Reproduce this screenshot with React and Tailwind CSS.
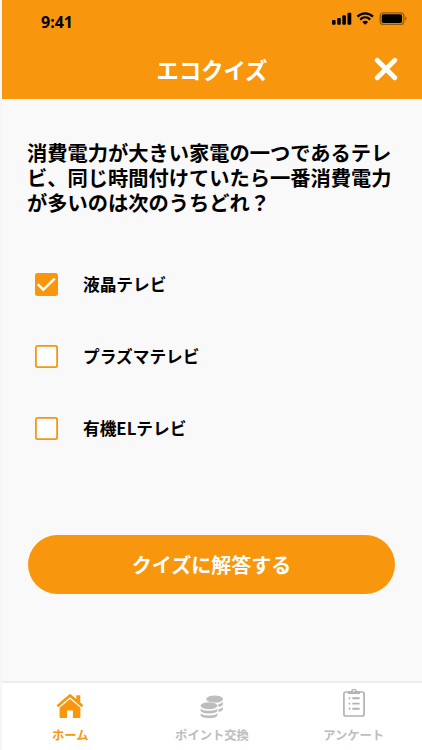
import React, { useState } from 'react';

const options = [
  { id: 'lcd', label: '液晶テレビ' },
  { id: 'plasma', label: 'プラズマテレビ' },
  { id: 'oled', label: '有機ELテレビ' },
];

const StatusIcons = () => (
  <svg width="78" height="16" viewBox="0 0 78 16" fill="none">
    {/* Signal */}
    <rect x="2" y="9" width="3.6" height="4.8" rx="1" fill="#000" />
    <rect x="7.2" y="7" width="3.6" height="6.8" rx="1" fill="#000" />
    <rect x="12.3" y="4.3" width="3.6" height="9.5" rx="1" fill="#000" />
    <rect x="17.5" y="1.8" width="3.8" height="12" rx="1" fill="#000" />
    {/* Wifi */}
    <path d="M27.4 5.6C32 1.2 38.4 1.2 43 5.6" stroke="#000" strokeWidth="2.3" />
    <path d="M30.2 8.6C33.2 5.7 37.2 5.7 40.2 8.6" stroke="#000" strokeWidth="2.2" />
    <path d="M32.3 10.9C34.2 9.3 36.2 9.3 38.1 10.9L35.2 13.7Z" fill="#000" />
    {/* Battery */}
    <rect x="50.2" y="1.8" width="23.6" height="11.6" rx="3" stroke="#000" strokeOpacity=".4" strokeWidth="1.3" />
    <rect x="51.7" y="3.3" width="20.4" height="8.6" rx="1.6" fill="#000" />
    <path d="M75.1 5.6C77.2 6.3 77.2 8.9 75.1 9.6Z" fill="#000" fillOpacity=".4" />
  </svg>
);

const HomeIcon = () => (
  <svg width="28" height="26" viewBox="0 0 28 26" fill="#f8970e">
    <path d="M14 .8 .6 12.2 2.3 14.2 14 4.3 25.7 14.2 27.4 12.2 24.3 9.5V2.3H20.3V6.1Z" />
    <path d="M14 6 3.6 14.8V24.3Q3.6 25 4.3 25H11V17.4H16.9V25H23.7Q24.4 25 24.4 24.3V14.8Z" />
  </svg>
);

const CoinsIcon = () => (
  <svg width="24" height="24" viewBox="0 0 24 24" fill="#bdbdbd">
    <ellipse cx="14.6" cy="4.1" rx="8.4" ry="3.6" />
    <path d="M18.2 9.3C20.5 8.9 22.2 8 23 6.8V9C23 10.6 21.1 11.6 18.6 12Z" />
    <path d="M18.6 14.2C20.7 13.7 22.3 12.9 23 11.9V13.7C23 15.4 21.1 16.5 18.6 17Z" />
    <ellipse cx="9" cy="10.8" rx="8.9" ry="4.1" fill="#fff" />
    <ellipse cx="9" cy="10.8" rx="8.4" ry="3.5" />
    <path d="M.6 13.6C2.3 16.6 15.7 16.6 17.4 13.6V15.4C17.4 19.4.6 19.4.6 15.4Z" />
    <path d="M.6 18.2C2.3 21.2 15.7 21.2 17.4 18.2V20C17.4 24.2.6 24.2.6 20Z" />
  </svg>
);

const SurveyIcon = () => (
  <svg width="22" height="29" viewBox="0 0 22 29" fill="none" stroke="#b3b3b3">
    <rect x=".9" y="4" width="20.2" height="24" rx="2" strokeWidth="1.7" />
    <path d="M5 3.2H8.1C8.1-.1 13.9-.1 13.9 3.2H17V5.9H5Z" fill="#b3b3b3" stroke="none" />
    <circle cx="11" cy="2.8" r="1" fill="#fff" stroke="none" />
    <path d="M5.6 10.3H7.3M9.3 10.3H16.6M5.6 15.6H7.3M9.3 15.6H16.6M5.6 20.8H7.3M9.3 20.8H16.6" strokeWidth="1.9" />
  </svg>
);

const Checkbox = ({ checked }) => (
  <svg width="23" height="23" viewBox="0 0 23 23" className="shrink-0">
    <rect x=".9" y=".9" width="21.2" height="21.2" rx="1.6" fill={checked ? '#f8970e' : '#fff'} stroke="#f8970e" strokeWidth="1.8" />
    {checked && <path d="M2.8 11.2 8.3 16.7 19.7 5.6" fill="none" stroke="#fff" strokeWidth="2.4" />}
  </svg>
);

const App = () => {
  const [selected, setSelected] = useState('lcd');

  return (
    <div className="relative flex flex-col w-[422px] h-[750px] overflow-hidden bg-[#f9f9f9] border-l-2 border-[#f6f6f6] font-['Noto_Sans_CJK_JP',sans-serif] font-bold text-black">
      {/* Edge of the card behind this screen */}
      <div className="absolute -left-0.5 top-[94px] w-px h-[51px] bg-[#d5e5a0]" />

      <header className="h-[99px] shrink-0 bg-[#f8970e]">
        <div className="flex justify-between pl-[39px] pr-[14px] pt-[11px] h-[46px]">
          <span className="text-base leading-[22px] font-['Noto_Sans',sans-serif]">9:41</span>
          <StatusIcons />
        </div>
        <div className="grid grid-cols-[1fr_auto_1fr] items-center h-[46px]">
          <h1 className="col-start-2 text-[22.3px] leading-8 text-white">エコクイズ</h1>
          <button aria-label="閉じる" className="justify-self-end mr-6">
            <svg width="24" height="24" viewBox="0 0 24 24" stroke="#fff" strokeWidth="4.8" strokeLinecap="round">
              <path d="M3.2 3.2 20.8 20.8M20.8 3.2 3.2 20.8" />
            </svg>
          </button>
        </div>
      </header>

      <main className="flex-1 flex flex-col pl-[25px] pr-[27px] pt-[42px]">
        <h2 className="w-[368px] text-[20.25px] leading-[24.8px]">
          消費電力が大きい家電の一つであるテレビ、同じ時間付けていたら一番消費電力が多いのは次のうちどれ？
        </h2>

        <div className="flex flex-col gap-12 mt-[57px] pl-2">
          {options.map((option) => (
            <button
              key={option.id}
              onClick={() => setSelected(option.id)}
              className="flex items-center gap-[25px] h-6 text-left text-[16.7px] leading-6"
            >
              <Checkbox checked={selected === option.id} />
              <span>{option.label}</span>
            </button>
          ))}
        </div>

        <button className="w-[367px] h-[59px] mt-[95px] ml-px rounded-full bg-[#f8970e] text-white text-xl">
          クイズに解答する
        </button>
      </main>

      <nav className="grid grid-cols-3 h-[69px] shrink-0 -ml-0.5 bg-white border-t-2 border-[#ececec] text-[12.3px] leading-4 text-[#bdbdbd]">
        <button className="flex flex-col items-center justify-end pb-[7px] gap-2 text-[#f8970e]">
          <HomeIcon />
          <span>ホーム</span>
        </button>
        <button className="flex flex-col items-center justify-end pb-[7px] pl-0.5 gap-2">
          <CoinsIcon />
          <span>ポイント交換</span>
        </button>
        <button className="flex flex-col items-center justify-end pb-[7px] pl-1 gap-2.5">
          <SurveyIcon />
          <span>アンケート</span>
        </button>
      </nav>
    </div>
  );
};

export default App;
